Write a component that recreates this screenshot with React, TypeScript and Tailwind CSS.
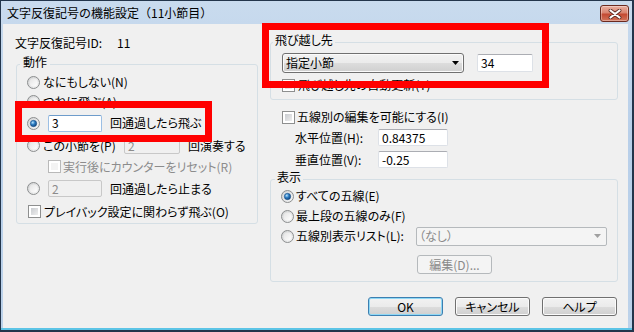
import React from "react";

const Radio = ({ checked = false }: { checked?: boolean }) => (
  <svg width="13" height="13" viewBox="0 0 13 13" className="shrink-0">
    <defs>
      <linearGradient id="rgOuter" x1="0" y1="0" x2="1" y2="1">
        <stop offset="0" stopColor="#cfd0d1" />
        <stop offset="1" stopColor="#f6f6f6" />
      </linearGradient>
      <linearGradient id="rgInner" x1="0" y1="0" x2="1" y2="1">
        <stop offset="0" stopColor="#e4e4e4" />
        <stop offset="1" stopColor="#ffffff" />
      </linearGradient>
      <radialGradient id="rgDot" cx="0.38" cy="0.35" r="0.7">
        <stop offset="0" stopColor="#b9e4ff" />
        <stop offset="0.45" stopColor="#2f7fc4" />
        <stop offset="1" stopColor="#0c3f78" />
      </radialGradient>
    </defs>
    <circle cx="6.5" cy="6.5" r="6" fill="url(#rgOuter)" stroke="#8c8e8f" strokeWidth="1" />
    <circle cx="6.5" cy="6.5" r="4" fill="url(#rgInner)" />
    {checked && <circle cx="6.5" cy="6.5" r="3.2" fill="url(#rgDot)" stroke="#1b4f86" strokeWidth="0.6" />}
  </svg>
);

const Check = ({ disabled = false }: { disabled?: boolean }) => (
  <div
    className={
      "w-[13px] h-[13px] shrink-0 border p-[2px] bg-white " +
      (disabled ? "border-[#b9b9b9]" : "border-[#8e8f8f]")
    }
  >
    <div
      className={
        "w-full h-full " +
        (disabled
          ? "bg-[#f3f3f3]"
          : "bg-[linear-gradient(135deg,#c9ccd0,#eeeeee)]")
      }
    />
  </div>
);

const TextBox = ({
  value,
  w,
  h = "h-[17px]",
  disabled = false,
  focus = false,
}: {
  value: string;
  w: string;
  h?: string;
  disabled?: boolean;
  focus?: boolean;
}) => (
  <div
    className={
      `${w} ${h} shrink-0 rounded-[2px] border flex items-center pl-[3px] leading-[14px] ` +
      (disabled
        ? "bg-[#f0f0f0] border-[#c8c8c8] text-[#8c8c8c]"
        : focus
        ? "bg-white border-[#9cbfe4] border-t-[#6e9ccb]"
        : "bg-white border-[#dde1e7] border-t-[#abadb3]")
    }
  >
    {value}
  </div>
);

const WinButton = ({
  children,
  def = false,
  disabled = false,
  w = "w-[75px]",
}: {
  children: React.ReactNode;
  def?: boolean;
  disabled?: boolean;
  w?: string;
}) => (
  <div
    className={
      `${w} h-[19px] shrink-0 rounded-[3px] border flex items-center justify-center leading-[14px] ` +
      (disabled
        ? "border-[#b5b9bc] bg-[#f4f4f4] text-[#8a8a8a]"
        : def
        ? "border-[#3c7fb1] bg-[linear-gradient(#f2f2f2_0%,#ebebeb_50%,#dddddd_50%,#cfcfcf_100%)] shadow-[inset_0_0_0_1px_#8fd8f5]"
        : "border-[#707070] bg-[linear-gradient(#f2f2f2_0%,#ebebeb_50%,#dddddd_50%,#cfcfcf_100%)] shadow-[inset_0_0_0_1px_#fbfbfb]")
    }
  >
    {children}
  </div>
);

export default function App() {
  return (
    <div className="relative w-[634px] h-[332px] overflow-hidden bg-[#23354b] pt-px pl-px pr-[2px] pb-[2px] font-['Noto_Sans_CJK_JP','Noto_Sans',sans-serif] text-[12px] leading-[16px] text-black [font-feature-settings:'palt']">
      <div className="h-full flex flex-col bg-[linear-gradient(#c9dbee,#b8cfe9_40%,#bcd2ea)] border-b-2 border-[#5cc4e6]">
        {/* Title bar */}
        <div className="h-[23px] shrink-0 flex justify-between pl-[6px] pr-[3px]">
          <div className="flex items-center [font-feature-settings:normal]">文字反復記号の機能設定（11小節目）</div>
          <div className="mt-[4px] w-[29px] h-[17px] rounded-[3px] border border-[#6b2a20] bg-[linear-gradient(#eab0a2,#d98470_45%,#c44a33_55%,#d2745a)] shadow-[inset_0_0_0_1px_rgba(255,255,255,0.35)] flex items-center justify-center">
            <svg width="14" height="10" viewBox="0 0 14 10">
              <path d="M2.5 1.5 L11.5 8.5 M11.5 1.5 L2.5 8.5" stroke="#5a2a22" strokeWidth="3.8" strokeLinecap="round" />
              <path d="M2.5 1.5 L11.5 8.5 M11.5 1.5 L2.5 8.5" stroke="#ffffff" strokeWidth="2.2" strokeLinecap="round" />
            </svg>
          </div>
        </div>

        {/* Client area */}
        <div className="flex-1 ml-[2px] mr-[4px] bg-[#f0f0f0] flex flex-col">
          <div className="flex pl-[13px] h-[262px] shrink-0">
            {/* Left column */}
            <div className="w-[242px] flex flex-col">
              <div className="mt-[11px] -ml-px h-[16px] flex items-center">
                <span className="w-[102px]">文字反復記号ID:</span>
                <span>11</span>
              </div>
              <fieldset className="mt-[5px] h-[168px] min-w-0 border border-[#d5dfe5] rounded-[3px] pl-[10px] pr-[4px]">
                <legend className="ml-[-7px] px-[3px] leading-[12px] pb-[4px]">動作</legend>
                <div className="flex flex-col">
                  <div className="h-[20px] flex items-center">
                    <Radio />
                    <span className="ml-[3px]">なにもしない(N)</span>
                  </div>
                  <div className="h-[19px] flex items-center">
                    <Radio />
                    <span className="ml-[3px]">つねに飛ぶ(A)</span>
                  </div>
                  <div className="h-[24px] flex items-center">
                    <Radio checked />
                    <div className="ml-[8px]">
                      <TextBox value="3" w="w-[54px]" focus />
                    </div>
                    <span className="ml-[8px]">回通過したら飛ぶ</span>
                  </div>
                  <div className="h-[21px] flex items-center">
                    <Radio />
                    <span className="ml-[3px] w-[81px]">この小節を(P)</span>
                    <TextBox value="2" w="w-[56px]" disabled />
                    <span className="ml-[8px]">回演奏する</span>
                  </div>
                  <div className="h-[21px] flex items-center pl-[21px]">
                    <Check disabled />
                    <span className="ml-[2px] text-[#8c8c8c]">実行後にカウンターをリセット(R)</span>
                  </div>
                  <div className="h-[23px] flex items-center">
                    <Radio />
                    <div className="ml-[8px]">
                      <TextBox value="2" w="w-[54px]" disabled />
                    </div>
                    <span className="ml-[8px]">回通過したら止まる</span>
                  </div>
                  <div className="h-[23px] flex items-center pl-px">
                    <Check />
                    <span className="ml-[3px]">プレイバック設定に関わらず飛ぶ(O)</span>
                  </div>
                </div>
              </fieldset>
            </div>

            {/* Right column */}
            <div className="ml-[12px] w-[348px] flex flex-col">
              <fieldset className="mt-[10px] h-[66px] min-w-0 border border-[#d5dfe5] rounded-[3px] pl-[11px] pr-[10px]">
                <legend className="ml-[-9px] px-[2px] leading-[12px] pb-[4px]">飛び越し先</legend>
                <div className="mt-[3px] h-[20px] flex items-center">
                  <div className="w-[182px] h-[20px] rounded-[3px] border border-[#707070] bg-[linear-gradient(#f2f2f2_0%,#ebebeb_50%,#dddddd_50%,#cfcfcf_100%)] shadow-[inset_0_0_0_1px_#fbfbfb] flex items-center justify-between pl-[3px] pr-[4px]">
                    <span>指定小節</span>
                    <svg width="7" height="4" viewBox="0 0 7 4">
                      <path d="M0 0 L7 0 L3.5 4 Z" fill="#000" />
                    </svg>
                  </div>
                  <div className="ml-[13px]">
                    <TextBox value="34" w="w-[56px]" h="h-[18px]" />
                  </div>
                </div>
                <div className="mt-[5px] h-[14px] flex items-center">
                  <Check />
                  <span className="ml-[3px]">飛び越し先の自動更新(T)</span>
                </div>
              </fieldset>

              <div className="mt-[10px] h-[14px] flex items-center pl-[12px]">
                <Check />
                <span className="ml-[2px]">五線別の編集を可能にする(I)</span>
              </div>
              <div className="mt-[5px] h-[17px] flex items-center pl-[25px]">
                <span className="w-[83px]">水平位置(H):</span>
                <TextBox value="0.84375" w="w-[70px]" />
              </div>
              <div className="mt-[5px] h-[17px] flex items-center pl-[25px]">
                <span className="w-[83px]">垂直位置(V):</span>
                <TextBox value="-0.25" w="w-[70px]" />
              </div>

              <fieldset className="mt-[3px] h-[111px] min-w-0 border border-[#d5dfe5] rounded-[3px] pl-[10px] pr-[10px]">
                <legend className="ml-[-6px] px-[2px] leading-[12px] pb-[4px]">表示</legend>
                <div className="-mt-px h-[20px] flex items-center">
                  <Radio checked />
                  <span className="ml-[2px]">すべての五線(E)</span>
                </div>
                <div className="h-[20px] flex items-center">
                  <Radio />
                  <span className="ml-[2px]">最上段の五線のみ(F)</span>
                </div>
                <div className="h-[20px] flex items-center">
                  <Radio />
                  <span className="ml-[2px]">五線別表示リスト(L):</span>
                  <div className="ml-auto w-[191px] h-[19px] rounded-[2px] border border-[#b5b9bc] bg-[#f4f4f4] text-[#8a8a8a] flex items-center justify-between pl-[2px] pr-[5px]">
                    <span>（なし）</span>
                    <svg width="7" height="4" viewBox="0 0 7 4">
                      <path d="M0 0 L7 0 L3.5 4 Z" fill="#a0a0a0" />
                    </svg>
                  </div>
                </div>
                <div className="mt-[9px] flex pl-[136px]">
                  <WinButton disabled>編集(D)...</WinButton>
                </div>
              </fieldset>
            </div>
          </div>

          {/* Bottom buttons */}
          <div className="mt-[11px] flex justify-end gap-[12px] pr-[11px]">
            <WinButton def>OK</WinButton>
            <WinButton>キャンセル</WinButton>
            <WinButton>ヘルプ</WinButton>
          </div>
        </div>
      </div>

      {/* Annotation boxes */}
      <div className="absolute left-[15px] top-[101px] w-[197px] h-[41px] border-[7px] border-[#ff0000]" />
      <div className="absolute left-[262px] top-[23px] w-[287px] h-[65px] border-[7px] border-[#ff0000]" />
    </div>
  );
}
